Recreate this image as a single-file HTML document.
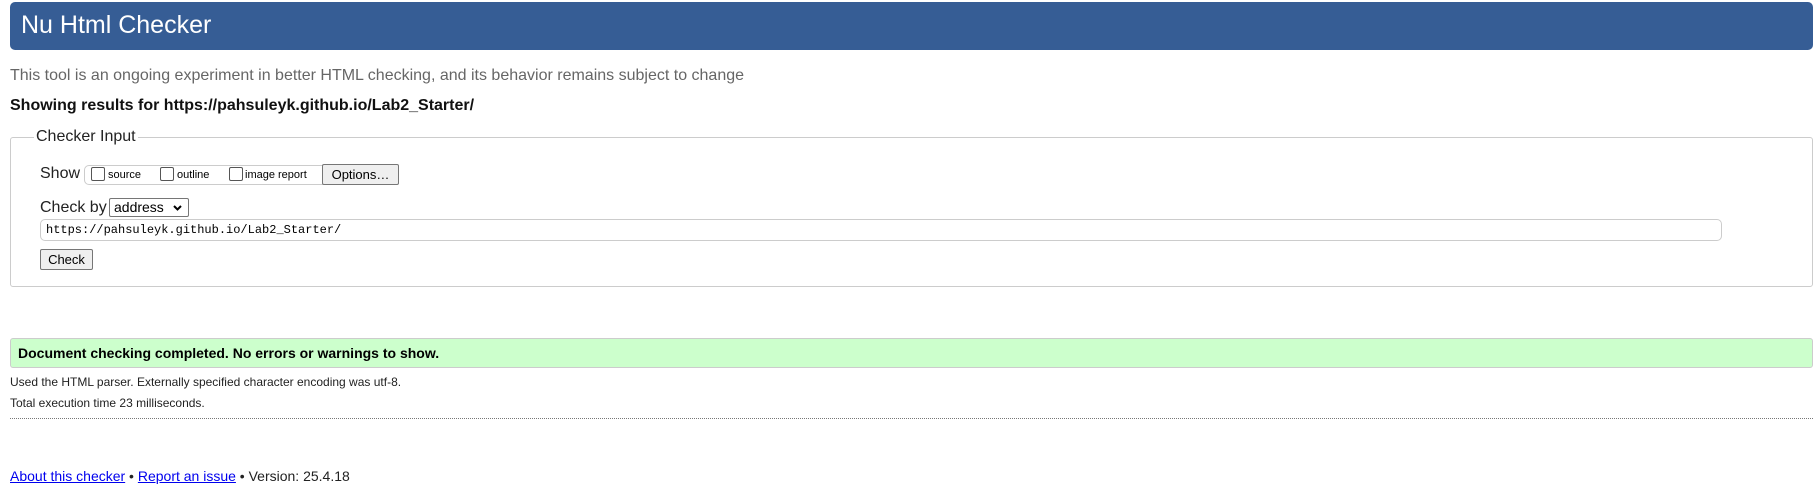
<!DOCTYPE html>
<html><head><meta charset="utf-8"><style>
body{margin:0;width:1818px;height:495px;background:#fff;font-family:"Liberation Sans",Arial,sans-serif;position:relative;overflow:hidden;color:#000}
.a{position:absolute;white-space:nowrap}
#hd{left:10px;top:2px;width:1803px;height:48px;background:#365d95;border-radius:5px}
#hd span{position:absolute;left:11px;top:9px;color:#fff;font-size:25px}
.cb{position:absolute;width:12px;height:12px;border:1px solid #555;border-radius:2px;background:#fff}
.btn{position:absolute;background:#efefef;border:1px solid #767676;border-radius:2px;box-sizing:border-box;text-align:center}
</style></head><body>
<div id="hd" class="a"><span>Nu Html Checker</span></div>
<div class="a" style="left:10px;top:67px;font-size:16px;color:#666">This tool is an ongoing experiment in better HTML checking, and its behavior remains subject to change</div>
<div class="a" style="left:10px;top:97px;font-size:16px;font-weight:bold;color:#111">Showing results for https://pahsuleyk.github.io/Lab2_Starter/</div>
<div class="a" style="left:10px;top:137px;width:1801px;height:148px;border:1px solid #ccc;border-radius:3px"></div>
<div class="a" style="left:34px;top:128px;background:#fff;padding:0 2px;font-size:16px;color:#222">Checker Input</div>
<div class="a" style="left:40px;top:165px;font-size:16px;color:#222">Show</div>
<div class="a" style="left:84px;top:165px;width:260px;height:18px;border:1px solid #ccc;border-radius:5px"></div>
<div class="cb" style="left:91px;top:167px"></div><div class="a" style="left:108px;top:169px;font-size:11px">source</div>
<div class="cb" style="left:160px;top:167px"></div><div class="a" style="left:177px;top:169px;font-size:11px">outline</div>
<div class="cb" style="left:229px;top:167px"></div><div class="a" style="left:245px;top:169px;font-size:11px">image report</div>
<div class="btn" style="left:322px;top:164px;width:77px;height:21px;font-size:13px;line-height:19px">Options…</div>
<div class="a" style="left:40px;top:199px;font-size:16px;color:#222">Check by</div>
<div class="a" style="left:109px;top:198px;width:80px;height:19px;border:1px solid #767676;border-radius:2px;box-sizing:border-box;font-size:14px;line-height:17px;padding-left:4px">address<svg style="position:absolute;right:6px;top:6px" width="9" height="6" viewBox="0 0 9 6"><path d="M1 1L4.5 4.5L8 1" fill="none" stroke="#000" stroke-width="2"/></svg></div>
<div class="a" style="left:40px;top:219px;width:1682px;height:22px;border:1px solid #ccc;border-radius:5px;box-sizing:border-box;font-family:'Liberation Mono',monospace;font-size:12px;line-height:20px;padding-left:5px">https://pahsuleyk.github.io/Lab2_Starter/</div>
<div class="btn" style="left:40px;top:249px;width:53px;height:21px;font-size:13px;line-height:19px">Check</div>
<div class="a" style="left:10px;top:338px;width:1801px;height:28px;background:#ccffcc;border:1px solid #ccc;border-radius:3px"></div>
<div class="a" style="left:18px;top:345px;font-size:14px;font-weight:bold">Document checking completed. No errors or warnings to show.</div>
<div class="a" style="left:10px;top:375px;font-size:12px;color:#222">Used the HTML parser. Externally specified character encoding was utf-8.</div>
<div class="a" style="left:10px;top:396px;font-size:12px;color:#222">Total execution time 23 milliseconds.</div>
<div class="a" style="left:10px;top:418px;width:1803px;border-top:1px dotted #777"></div>
<div class="a" style="left:10px;top:468px;font-size:14px;color:#222"><span style="color:#00e;text-decoration:underline">About this checker</span> • <span style="color:#00e;text-decoration:underline">Report an issue</span> • Version: 25.4.18</div>
</body></html>
